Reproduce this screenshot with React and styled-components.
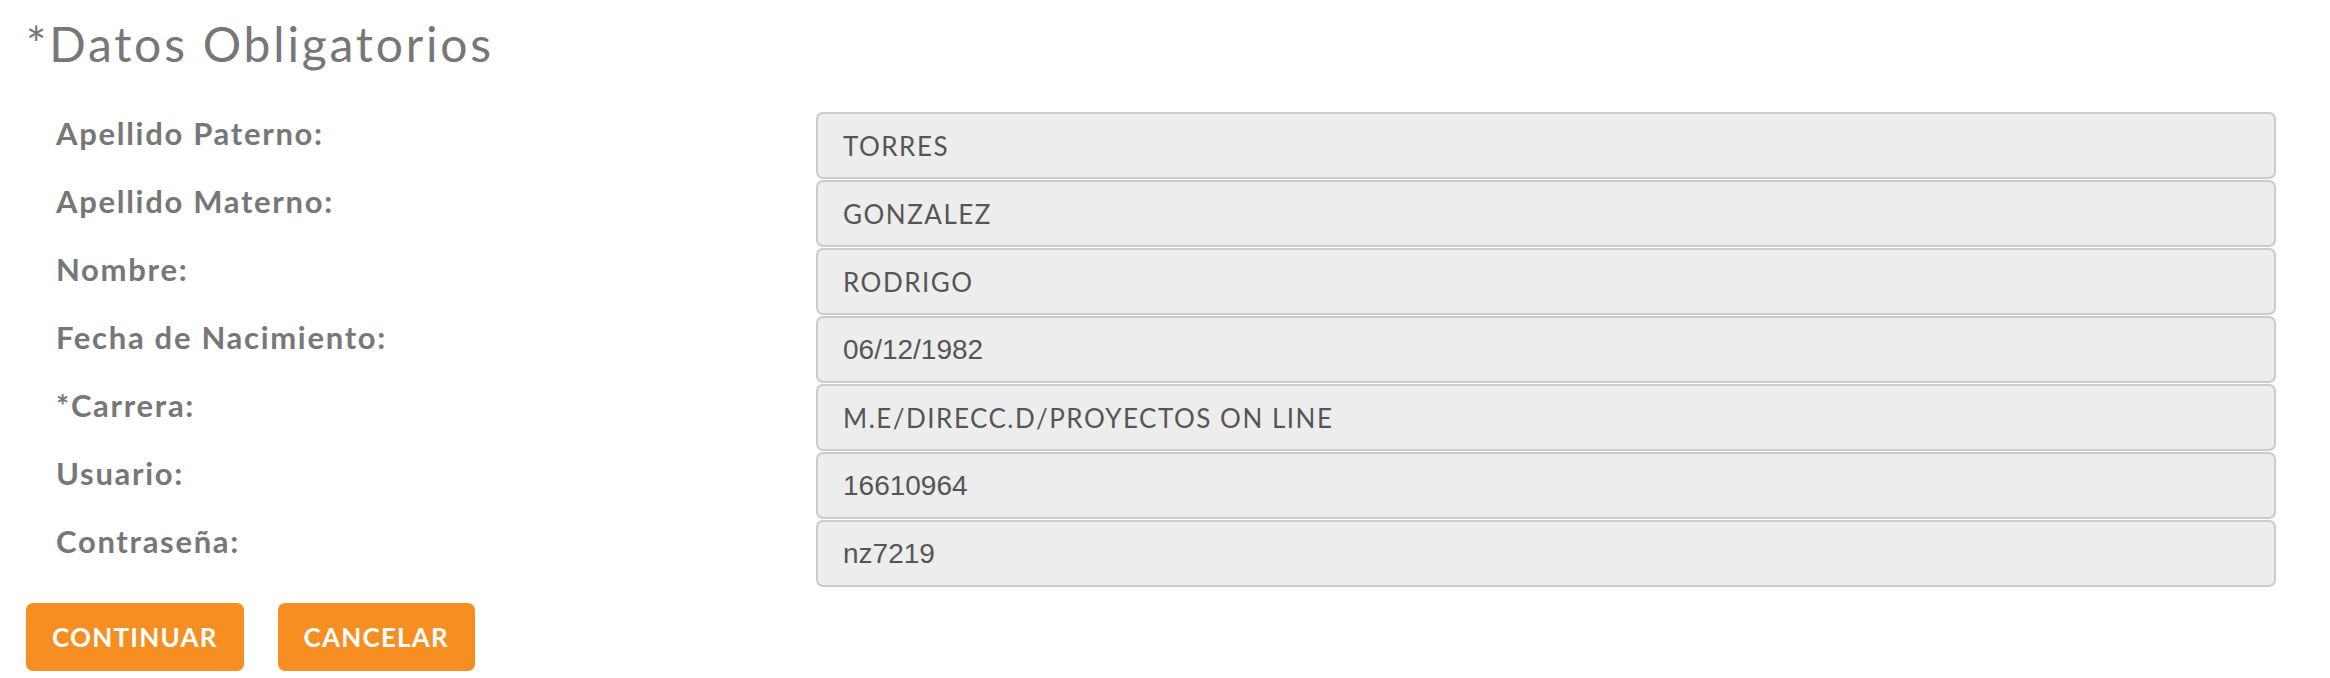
import styled, { createGlobalStyle } from 'styled-components';

const GlobalStyle = createGlobalStyle`
    body {
        margin: 0;
        background: #fff;
        font-family: Lato, "Open Sans", sans-serif;
    }
`

const Page = styled.div`
    padding: 15px 54px 0 26px;
`

const Title = styled.h1`
    margin: 0;
    font-size: 48px;
    line-height: 58px;
    font-weight: 400;
    letter-spacing: 2.8px;
    color: #777;
`

const Fields = styled.div`
    display: grid;
    grid-template-columns: 790px 1fr;
    row-gap: 1px;
    margin-top: 39px;
`

const Label = styled.label`
    padding-left: 30px;
    padding-top: 1px;
    font-size: 31px;
    line-height: 40px;
    font-weight: 700;
    letter-spacing: 1.7px;
    color: #777;
`

const Input = styled.div`
    box-sizing: border-box;
    height: 67px;
    display: flex;
    align-items: center;
    padding: 0 25px;
    background: #ededed;
    border: 2px solid #cbcbcb;
    border-radius: 7px;
    font-family: ${p => p.$plain ? '"Liberation Sans", Arial, sans-serif' : 'Lato, "Open Sans", sans-serif'};
    font-size: ${p => p.$plain ? '28px' : '26px'};
    letter-spacing: ${p => p.$plain ? '0' : '1.5px'};
    color: #555;
`

const Actions = styled.div`
    display: flex;
    gap: 34px;
    margin-top: 16px;
`

const Button = styled.button`
    height: 68px;
    padding: 0 26px;
    border: none;
    border-radius: 7px;
    background: #f68e21;
    color: #fff;
    font-family: Lato, "Open Sans", sans-serif;
    font-size: 26px;
    font-weight: 700;
    letter-spacing: 1.2px;
    cursor: pointer;
`

const fields = [
    ['Apellido Paterno:', 'TORRES'],
    ['Apellido Materno:', 'GONZALEZ'],
    ['Nombre:', 'RODRIGO'],
    ['Fecha de Nacimiento:', '06/12/1982', true],
    ['*Carrera:', 'M.E/DIRECC.D/PROYECTOS ON LINE'],
    ['Usuario:', '16610964', true],
    ['Contraseña:', 'nz7219', true],
]

function App(){
    return (
        <>
            <GlobalStyle />
            <Page>
                <Title>*Datos Obligatorios</Title>
                <Fields>
                    {fields.map(([label, value, plain]) => (
                        <>
                            <Label key={label}>{label}</Label>
                            <Input $plain={plain}>{value}</Input>
                        </>
                    ))}
                </Fields>
                <Actions>
                    <Button>CONTINUAR</Button>
                    <Button>CANCELAR</Button>
                </Actions>
            </Page>
        </>
    )
}

export default App;
